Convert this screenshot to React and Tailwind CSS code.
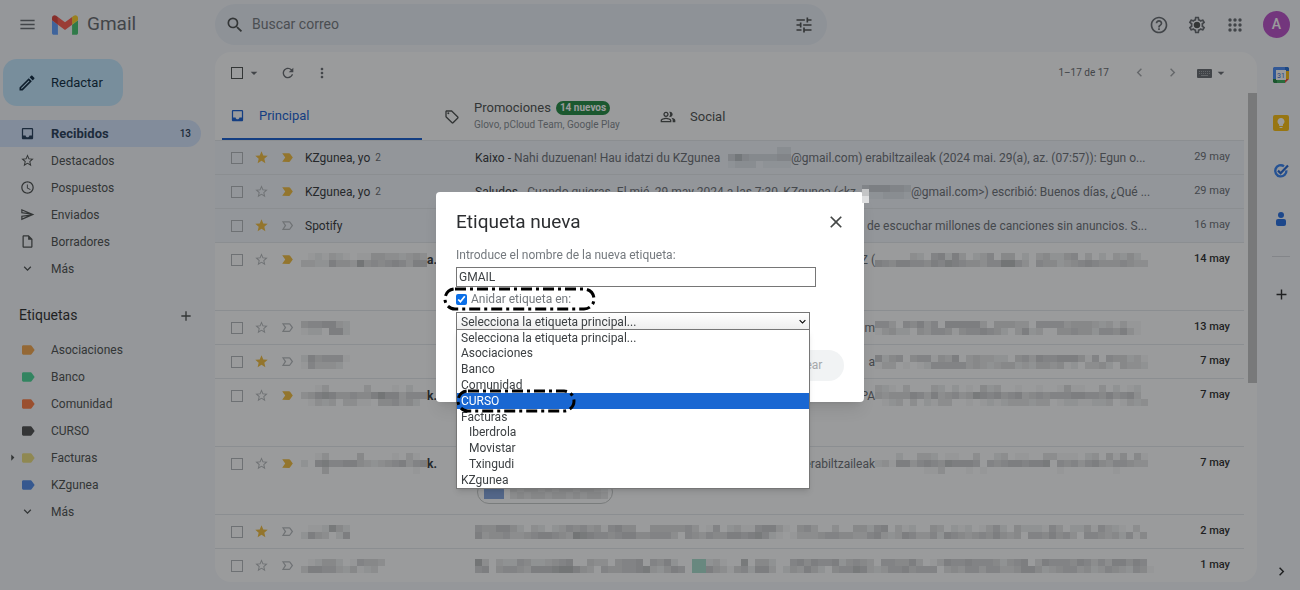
import React from "react";
import {
  MdAdd,
  MdArrowDropDown,
  MdArrowRight,
  MdChevronLeft,
  MdChevronRight,
  MdClose,
  MdExpandMore,
  MdHelpOutline,
  MdInbox,
  MdKeyboard,
  MdLabel,
  MdLabelImportant,
  MdLabelImportantOutline,
  MdLightbulb,
  MdMenu,
  MdMoreVert,
  MdOutlineEdit,
  MdOutlineInsertDriveFile,
  MdOutlinePeopleAlt,
  MdOutlineSell,
  MdOutlineSend,
  MdOutlineSettings,
  MdRefresh,
  MdSchedule,
  MdSearch,
  MdStar,
  MdStarBorder,
  MdTune,
} from "react-icons/md";

const folders = [
  { name: "Recibidos", icon: MdInbox, count: 13 },
  { name: "Destacados", icon: MdStarBorder },
  { name: "Pospuestos", icon: MdSchedule },
  { name: "Enviados", icon: MdOutlineSend },
  { name: "Borradores", icon: MdOutlineInsertDriveFile },
  { name: "Más", icon: MdExpandMore },
];

const labels = [
  { name: "Asociaciones", color: "text-[#f5a344]" },
  { name: "Banco", color: "text-[#43d692]" },
  { name: "Comunidad", color: "text-[#ff7537]" },
  { name: "CURSO", color: "text-[#464646]" },
  { name: "Facturas", color: "text-[#ecdc78]", nested: true },
  { name: "KZgunea", color: "text-[#4986e7]" },
];

const options = [
  { name: "Selecciona la etiqueta principal..." },
  { name: "Asociaciones" },
  { name: "Banco" },
  { name: "Comunidad" },
  { name: "CURSO", active: true },
  { name: "Facturas" },
  { name: "Iberdrola", child: true },
  { name: "Movistar", child: true },
  { name: "Txingudi", child: true },
  { name: "KZgunea" },
];

// Each digit is the darkness of one 7px block
const mails = [
  {
    from: "KZgunea, yo",
    thread: 2,
    star: true,
    important: true,
    read: true,
    date: "29 may",
    subject: "Kaixo",
    lead: "Nahi duzuenan! Hau idatzi du KZgunea",
    leadWidth: "w-[253px]",
    blocks: ["000000022", "474333344", "122201111"],
    tail: "@gmail.com) erabiltzaileak (2024 mai. 29(a), az. (07:57)): Egun o...",
  },
  {
    from: "KZgunea, yo",
    thread: 2,
    important: true,
    read: true,
    date: "29 may",
    subject: "Saludos",
    lead: "Cuando quieras. El mié, 29 may 2024 a las 7:30, KZgunea (<kz",
    leadWidth: "w-[387px]",
    blocks: ["4555443", "2112221"],
    tail: "@gmail.com>) escribió: Buenos días, ¿Qué ...",
  },
  {
    from: "Spotify",
    star: true,
    read: true,
    date: "16 may",
    leadWidth: "w-[392px]",
    tail: "de escuchar millones de canciones sin anuncios. S...",
  },
  {
    important: true,
    tall: true,
    date: "14 may",
    fromBlocks: ["012132101144332343", "332264438454565366"],
    fromTail: "a.",
    lead: "Z (",
    leadWidth: "w-[400px]",
    blocks: ["000003205626302350440203422450302032420", "654665546576544355885305442345654445433"],
  },
  {
    date: "13 may",
    fromBlocks: ["4556632", "1220662"],
    lead: "m",
    leadWidth: "w-[400px]",
    blocks: ["55305463506666630444330555534443231311", "13422043554145565420362300445442554631"],
  },
  {
    star: true,
    date: "7 may",
    fromBlocks: ["2645551", "1533320"],
    lead: "a",
    leadWidth: "w-[400px]",
    blocks: ["624504551436034332204536556664150544231", "133010125555534323442324434120334204332"],
  },
  {
    important: true,
    tall: true,
    date: "7 may",
    fromBlocks: ["001300000300010200", "346764454468663555", "013230331104453420"],
    fromTail: "k.",
    lead: "PA",
    leadWidth: "w-[400px]",
    blocks: ["321030003202010423001001001411003020120", "434446536345347656456345455566554645630", "012303021330010121233323301221122301323"],
  },
  {
    important: true,
    tall: true,
    date: "7 may",
    fromBlocks: ["001300004000010310", "206755664323456356", "000400000000000010"],
    fromTail: "k.",
    lead: "erabiltzaileak",
    leadWidth: "w-[400px]",
    blocks: ["000200332011003002301100331110230414041", "231663565476665054566566705453564355433", "000000011300010100000000001000000010000"],
    attachment: true,
  },
  {
    star: true,
    date: "2 may",
    fromBlocks: ["0112742", "2643026"],
    leadWidth: "w-0",
    blocks: [
      "544664203202354534156440044444530150231156631045300300442560312004302120135204222153022415321030",
      "634453345665438765545664455530543544665675210133345544335632365335265434546434055464530554342514",
    ],
  },
  {
    date: "1 may",
    fromBlocks: ["012442015443", "366553241230"],
    leadWidth: "w-0",
    blocks: [
      "8303225422345600433045560546200gg2310070442005646556245430554463013655655542456036555465353664650",
      "5604554366678864305445567324650gg6431452663024364204557632355645550343553553346642345534235432541",
    ],
  },
];

const Mosaic = ({ rows }) => {
  const cols = Math.max(...rows.map((r) => r.length));
  return (
    <svg
      width={cols * 7}
      height={rows.length * 7}
      shapeRendering="crispEdges"
      className="shrink-0"
      aria-hidden="true"
    >
      {rows.map((row, y) =>
        [...row].map((n, x) => (
          <rect
            key={`${x}-${y}`}
            x={x * 7}
            y={y * 7}
            width="7"
            height="7"
            fill={n === "g" ? "#a5dccb" : "#3c4043"}
            opacity={n === "g" ? 1 : n * 0.045}
          />
        ))
      )}
    </svg>
  );
};

const GmailLogo = () => (
  <svg viewBox="52 42 88 66" className="w-[26px] h-[20px]" aria-hidden="true">
    <path fill="#5a9bff" d="M58 108h14V74L52 59v43c0 3.32 2.69 6 6 6" />
    <path fill="#3fc468" d="M120 108h14c3.32 0 6-2.69 6-6V59l-20 15" />
    <path fill="#ffd01c" d="M120 48v26l20-15v-8c0-7.42-8.47-11.65-14.4-7.2" />
    <path fill="#ff5546" d="M72 74V48l24 18 24-18v26L96 92" />
    <path fill="#dc3a30" d="M52 51v8l20 15V48l-5.6-4.2c-5.94-4.45-14.4-.22-14.4 7.2" />
  </svg>
);

const AppsIcon = () => (
  <svg viewBox="0 0 20 20" className="size-[20px]" fill="currentColor" aria-hidden="true">
    {[5, 10, 15].map((y) => [5, 10, 15].map((x) => <circle key={`${x}-${y}`} cx={x} cy={y} r="1.7" />))}
  </svg>
);

const KeyboardIcon = () => (
  <svg viewBox="0 0 18 18" className="ml-[14px] size-[18px]" aria-hidden="true">
    <rect x="2" y="5" width="15" height="9" rx="1" fill="#5f6368" />
    <path stroke="#9a9da0" strokeDasharray="1 1" d="M4 7.5h11M4 9.5h11" />
    <path stroke="#9a9da0" d="M6 11.5h7" />
  </svg>
);

const Header = () => (
  <header className="flex h-[49px] items-center">
    <div className="flex w-[215px] shrink-0 items-center pl-[18px]">
      <button aria-label="Menú principal" className="text-[#5f6368]">
        <MdMenu size={19} />
      </button>
      <a href="#" className="ml-[15px] flex items-center gap-[9px]">
        <GmailLogo />
        <span className="text-[19px] text-[#5f6368]">Gmail</span>
      </a>
    </div>
    <div className="flex h-[41px] w-[612px] items-center rounded-full bg-[#e9eef6] px-[10px] text-[#444746]">
      <MdSearch size={20} />
      <input
        type="text"
        aria-label="Buscar correo"
        placeholder="Buscar correo"
        className="ml-[7px] flex-1 bg-transparent text-[14px] placeholder:text-[#6f7479] outline-none"
      />
      <button aria-label="Opciones de búsqueda" className="mr-[3px]">
        <MdTune size={20} />
      </button>
    </div>
    <div className="ml-auto flex items-center gap-[18px] pr-[10px] text-[#5f6368]">
      <button aria-label="Ayuda"><MdHelpOutline size={20} /></button>
      <button aria-label="Configuración" className="relative flex items-center justify-center">
        <MdOutlineSettings size={20} />
        <span className="absolute size-[6px] rounded-full bg-[#444746]" />
      </button>
      <button aria-label="Aplicaciones"><AppsIcon /></button>
      <button className="size-[27px] rounded-full bg-[#b948c6] text-[14px] font-medium text-white">A</button>
    </div>
  </header>
);

const Sidebar = () => (
  <nav className="w-[215px] shrink-0 pt-[10px] text-[12px] text-[#444746]">
    <button className="ml-[3px] flex h-[47px] w-[120px] items-center gap-[14px] rounded-[14px] bg-[#c2e7ff] pl-[14px] text-[13px] text-[#001d35]">
      <MdOutlineEdit size={20} />
      Redactar
    </button>
    <ul className="mt-[14px]">
      {folders.map(({ name, icon: Icon, count }) => (
        <li key={name}>
          <a
            href="#"
            className={`mr-[14px] flex h-[27px] items-center rounded-r-full pl-[20px] pr-[10px] ${
              count ? "bg-[#d3e3fd] text-[13px] font-bold text-[#1b3350]" : ""
            }`}
          >
            <Icon size={15} />
            <span className="ml-[16px] flex-1">{name}</span>
            {count && <span className="text-[10px] font-medium">{count}</span>}
          </a>
        </li>
      ))}
    </ul>
    <div className="mt-[20px] mb-[7px] flex h-[27px] items-center justify-between pl-[19px] pr-[21px]">
      <h2 className="text-[14px] text-[#1f1f1f]">Etiquetas</h2>
      <button aria-label="Crear etiqueta"><MdAdd size={16} /></button>
    </div>
    <ul>
      {labels.map(({ name, color, nested }) => (
        <li key={name}>
          <a href="#" className="flex h-[27px] items-center pl-[5px]">
            <span className="w-[15px] shrink-0">{nested && <MdArrowRight size={15} />}</span>
            <MdLabel size={16} className={color} />
            <span className="ml-[15px]">{name}</span>
          </a>
        </li>
      ))}
      <li>
        <a href="#" className="flex h-[27px] items-center pl-[20px]">
          <MdExpandMore size={15} />
          <span className="ml-[16px]">Más</span>
        </a>
      </li>
    </ul>
  </nav>
);

const Toolbar = () => (
  <div className="flex h-[41px] shrink-0 items-center pl-[16px] pr-[28px] text-[#5f6368]">
    <input type="checkbox" aria-label="Seleccionar todo" className="size-[12px] appearance-none border border-[#444746]" />
    <MdArrowDropDown size={16} className="ml-[3px]" />
    <button aria-label="Actualizar" className="ml-[18px]"><MdRefresh size={16} /></button>
    <button aria-label="Más acciones" className="ml-[18px]"><MdMoreVert size={16} /></button>
    <span className="ml-auto text-[10px]">1–17 de 17</span>
    <button aria-label="Anterior" className="ml-[22px] text-[#a0a3a6]"><MdChevronLeft size={17} /></button>
    <button aria-label="Siguiente" className="ml-[16px] text-[#a0a3a6]"><MdChevronRight size={17} /></button>
    <KeyboardIcon />
    <MdArrowDropDown size={16} />
  </div>
);

const Tabs = () => (
  <div className="flex h-[47px] shrink-0 text-[13px] text-[#444746]">
    <button className="ml-[7px] flex w-[200px] items-center border-b-2 border-[#0b57d0] pl-[8px] text-[#0b57d0]">
      <MdInbox size={15} />
      <span className="ml-[14px]">Principal</span>
    </button>
    <button className="ml-[15px] flex w-[216px] items-center pl-[7px] text-left">
      <MdOutlineSell size={16} />
      <span className="ml-[14px]">
        <span className="flex items-center gap-[5px] leading-[16px]">
          Promociones
          <span className="rounded-full bg-[#198639] px-[4px] text-[10px] leading-[14px] font-bold text-white">
            14 nuevos
          </span>
        </span>
        <span className="block whitespace-nowrap text-[10px] leading-[18px] text-[#80868b]">Glovo, pCloud Team, Google Play</span>
      </span>
    </button>
    <button className="flex items-center pl-[7px]">
      <MdOutlinePeopleAlt size={16} />
      <span className="ml-[14px]">Social</span>
    </button>
  </div>
);

const MailRow = ({ mail }) => (
  <li
    className={`border-b border-[#e4e7eb] text-[12px] text-[#64686d] ${mail.tall ? "h-[68px]" : "h-[34px]"} ${
      mail.read ? "bg-[#f2f6fc]" : ""
    }`}
  >
    <div className="flex h-[33px] items-center pl-[16px] pr-[14px]">
      <input type="checkbox" aria-label="Seleccionar" className="size-[12px] shrink-0 appearance-none border border-[#b0b3b6]" />
      <button aria-label="Destacar" className="ml-[11px] text-[#b3b6b9]">
        {mail.star ? <MdStar size={15} className="text-[#f2bb35]" /> : <MdStarBorder size={15} />}
      </button>
      <button aria-label="Importante" className="ml-[11px] text-[#b3b6b9]">
        {mail.important ? (
          <MdLabelImportant size={15} className="text-[#f2bb35]" />
        ) : (
          <MdLabelImportantOutline size={15} />
        )}
      </button>
      <div className="ml-[6px] flex w-[174px] shrink-0 items-center text-[#2c2e31]">
        {mail.from && <span className="ml-[4px]">{mail.from}</span>}
        {mail.thread && <span className="ml-[5px] text-[10px] text-[#5f6368]">{mail.thread}</span>}
        {mail.fromBlocks && <Mosaic rows={mail.fromBlocks} />}
        {mail.fromTail && <span className="font-bold">{mail.fromTail}</span>}
      </div>
      <div className="flex min-w-0 flex-1 items-center overflow-hidden whitespace-nowrap">
        <span className={`shrink-0 ${mail.leadWidth} ${mail.subject ? "" : "text-right"}`}>
          {mail.subject && <span className="text-[#2c2e31]">{mail.subject} - </span>}
          {mail.lead}
        </span>
        {mail.blocks && <Mosaic rows={mail.blocks} />}
        {mail.tail}
      </div>
      <span className={`ml-[16px] text-[11px] ${mail.read ? "" : "font-medium text-[#1f1f1f]"}`}>{mail.date}</span>
    </div>
    {mail.attachment && (
      <div className="ml-[262px] flex h-[24px] w-[136px] items-end gap-[6px] rounded-full border border-[#c4c7c5] pl-[6px] pb-[4px]">
        <span className="h-[10px] w-[20px] bg-[#7fa0dd]" />
        <Mosaic rows={["43443434434432", "34344344343443"]} />
      </div>
    )}
  </li>
);

const Rail = () => (
  <aside className="flex w-[43px] shrink-0 flex-col items-center pt-[18px] pl-[5px] text-[#1f1f1f]">
    <svg viewBox="0 0 16 16" className="size-[16px]" aria-label="Calendar">
      <path fill="#4285f4" d="M1 0h11v4H4v8H0V1z" />
      <path fill="#1967d2" d="M12 0h3l1 1v3h-4z" />
      <path fill="#fbbc04" d="M12 4h4v8h-4z" />
      <path fill="#34a853" d="M4 12h8v4H4z" />
      <path fill="#188038" d="M0 12h4v4H1l-1-1z" />
      <path fill="#ea4335" d="M12 12h4l-4 4z" />
      <path fill="#fff" d="M3 3h10v10H3z" />
      <text x="8" y="11" textAnchor="middle" fontSize="7" fill="#1967d2">31</text>
    </svg>
    <span className="mt-[32px] flex size-[16px] items-center justify-center rounded-[2px] bg-[#fbbc04] text-white">
      <MdLightbulb size={12} />
    </span>
    <svg viewBox="0 0 16 16" className="mt-[32px] size-[16px]" fill="none" strokeWidth="2.4" aria-label="Tasks">
      <path stroke="#2b7bf0" d="M11 3.2A5.6 5.6 0 1 0 13.4 7.4" />
      <path stroke="#1a5fd0" strokeWidth="2.2" d="M5 7.6l2.6 2.6L15 2.6" />
    </svg>
    <svg viewBox="0 0 16 16" className="mt-[32px] size-[16px]" fill="#1a66e0" aria-label="Contactos">
      <circle cx="8" cy="4" r="3" />
      <path d="M3 10a2 2 0 0 1 2-2h6a2 2 0 0 1 2 2v3a2 2 0 0 1-2 2H5a2 2 0 0 1-2-2z" />
    </svg>
    <span className="mt-[29px] w-[18px] border-t border-[#d5d8dc]" />
    <button aria-label="Obtener complementos" className="mt-[29px]"><MdAdd size={17} /></button>
    <button aria-label="Ocultar panel" className="mt-auto mb-[10px]"><MdChevronRight size={17} /></button>
  </aside>
);

const Marker = ({ className, width }) => (
  <svg width={width} height="24" className={`pointer-events-none absolute ${className}`} aria-hidden="true">
    <rect
      x="2"
      y="2"
      width={width - 4}
      height="20"
      rx="10"
      fill="none"
      stroke="#000"
      strokeWidth="3"
      strokeDasharray="11 4 3 4"
    />
  </svg>
);

const LabelDialog = () => (
  <div className="fixed inset-0 flex items-center justify-center bg-[#202124]/45">
    <div role="dialog" aria-labelledby="dialog-title" className="relative mt-[3px] w-[428px] rounded-[4px] bg-white px-[20px] pb-[21px] shadow-lg">
      <div className="flex items-center justify-between pt-[16px] pb-[11px]">
        <h1 id="dialog-title" className="text-[19px] leading-[28px] text-[#2c2e31]">Etiqueta nueva</h1>
        <button aria-label="Cerrar" className="-mr-[2px] text-[#444746]"><MdClose size={20} /></button>
      </div>
      <label htmlFor="label-name" className="mb-[4px] block text-[12px] leading-[16px] text-[#74797e]">
        Introduce el nombre de la nueva etiqueta:
      </label>
      <input
        id="label-name"
        type="text"
        defaultValue="GMAIL"
        className="block h-[20px] w-[360px] border border-[#767676] px-[2px] text-[12px] text-[#3c4043]"
      />
      <div className="relative flex h-[25px] items-center gap-[4px] text-[12px] text-[#74797e]">
        <input id="nest" type="checkbox" defaultChecked className="size-[11px] accent-[#0b6fe8]" />
        <label htmlFor="nest">Anidar etiqueta en:</label>
        <Marker width={153} className="-left-[13px] top-0" />
      </div>
      <div className="relative w-[354px]">
        <select
          aria-label="Etiqueta principal"
          className="block h-[18px] w-full appearance-none border border-[#767676] bg-linear-to-b from-white to-[#eeeeee] pl-[4px] text-[12px] text-[#3c4043]"
        >
          {options.map(({ name }) => (
            <option key={name}>{name}</option>
          ))}
        </select>
        <MdExpandMore size={13} className="pointer-events-none absolute right-[1px] top-[3px] text-black" />
        <ul className="absolute top-[17px] z-10 grid h-[160px] w-full auto-rows-fr border border-[#767676] bg-white text-[12px] leading-[16px] text-[#3c4043] shadow-md">
          {options.map(({ name, active, child }) => (
            <li
              key={name}
              className={`${child ? "pl-[12px]" : "pl-[4px]"} ${active ? "relative bg-[#1967d2] text-white" : ""}`}
            >
              {name}
              {active && <Marker width={120} className="-left-[1px] -top-[4px]" />}
            </li>
          ))}
        </ul>
      </div>
      <div className="mt-[20px] flex justify-end">
        <button className="h-[31px] w-[72px] rounded-full bg-[#f1f3f4] text-[12px] text-[#a5a8ab]">Crear</button>
      </div>
      <span className="absolute -right-[5px] -top-[3px] flex w-[7px] flex-col">
        <span className="h-[7px] bg-[#c4c5c6]" />
        <span className="h-[7px] bg-[#dedfe0]" />
      </span>
    </div>
  </div>
);

const App = () => (
  <div className="flex h-screen flex-col overflow-hidden bg-[#f6f8fc] font-['Roboto','Liberation_Sans',sans-serif]">
    <Header />
    <div className="flex min-h-0 flex-1">
      <Sidebar />
      <main className="mt-[3px] mb-[8px] flex min-w-0 flex-1 flex-col overflow-hidden rounded-[16px] bg-white">
        <Toolbar />
        <div className="flex min-h-0 flex-1">
          <div className="min-w-0 flex-1">
            <Tabs />
            <ul className="border-t border-[#e4e7eb]">
              {mails.map((mail, i) => (
                <MailRow key={i} mail={mail} />
              ))}
            </ul>
          </div>
          <div className="ml-[4px] w-[9px]">
            <div className="h-[290px] bg-[#c1c1c1]" />
          </div>
        </div>
      </main>
      <Rail />
    </div>
    <LabelDialog />
  </div>
);

export default App;
